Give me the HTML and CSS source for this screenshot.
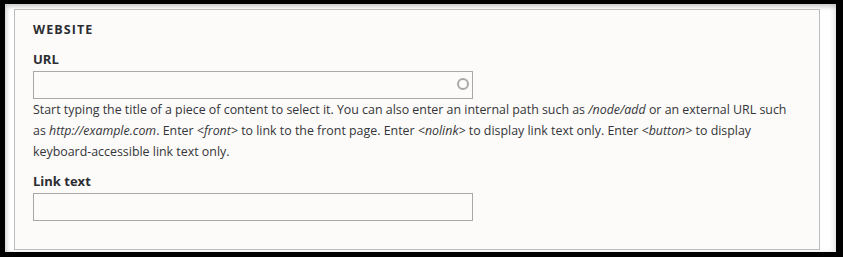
FILE: index.html
```html
<!DOCTYPE html>
<html lang="en">
<head>
<meta charset="UTF-8" />
<title>Website</title>
<link rel="stylesheet" href="styles.css">
</head>
<body>

<div class="panel">
  <div class="fieldset">
    <h2 class="fieldset-title">Website</h2>

    <div class="form-item">
      <label class="form-label" for="url">URL</label>
      <div class="autocomplete">
        <input type="text" id="url" class="form-text" />
        <span class="throbber"></span>
      </div>
      <div class="description">
        Start typing the title of a piece of content to select it. You can also enter an internal path such as <em>/node/add</em> or an external URL such as <em>http://example.com</em>. Enter <em>&lt;front&gt;</em> to link to the front page. Enter <em>&lt;nolink&gt;</em> to display link text only. Enter <em>&lt;button&gt;</em> to display keyboard-accessible link text only.
      </div>
    </div>

    <div class="form-item form-item-last">
      <label class="form-label" for="title">Link text</label>
      <input type="text" id="title" class="form-text" />
    </div>
  </div>
</div>

</body>
</html>
```

FILE: styles.css
```css
/* Reset */
* {
  margin: 0; padding: 0; box-sizing: border-box;
}
html, body {
  height: 100%;
  background: #000;
}
body {
  padding: 4px 7px 5px 5px;
  font-family: 'Open Sans', 'Noto Sans', sans-serif;
  color: #232429;
}

/* Panel blanc avec ombre interne */
.panel {
  height: 100%;
  background: #fff;
  padding: 5px 16px 2px 9px;
  box-shadow: inset 2px 3px 4px rgba(0, 0, 0, 0.18), inset -3px 0 4px rgba(0, 0, 0, 0.08);
}

/* Fieldset */
.fieldset {
  height: 100%;
  background: #fcfbf9;
  border: 1px solid #bdbdbd;
  padding: 10px 18px 0;
}
.fieldset-title {
  font-size: 12.5px;
  font-weight: 700;
  line-height: 20px;
  letter-spacing: 1.1px;
  text-transform: uppercase;
  color: #2c2d33;
  margin-bottom: 9px;
}

/* Champs */
.form-item {
  margin-bottom: 9px;
}
.form-label {
  display: block;
  font-size: 13px;
  font-weight: 700;
  line-height: 20px;
  color: #2c2d33;
  margin-bottom: 2px;
}
.form-text {
  display: block;
  width: 440px;
  height: 28px;
  border: 1px solid #a8a8a8;
  background: #fcfbf9;
  font: inherit;
}
.autocomplete {
  position: relative;
  width: 440px;
}
/* Icône de l'autocomplete */
.throbber {
  position: absolute;
  right: 4px;
  top: 7px;
  width: 12px;
  height: 12px;
  border: 2px solid #a8a8a8;
  border-radius: 50%;
}
.description {
  font-size: 12.4px;
  line-height: 21px;
  color: #34353a;
}
.description em {
  font-style: italic;
}
```
